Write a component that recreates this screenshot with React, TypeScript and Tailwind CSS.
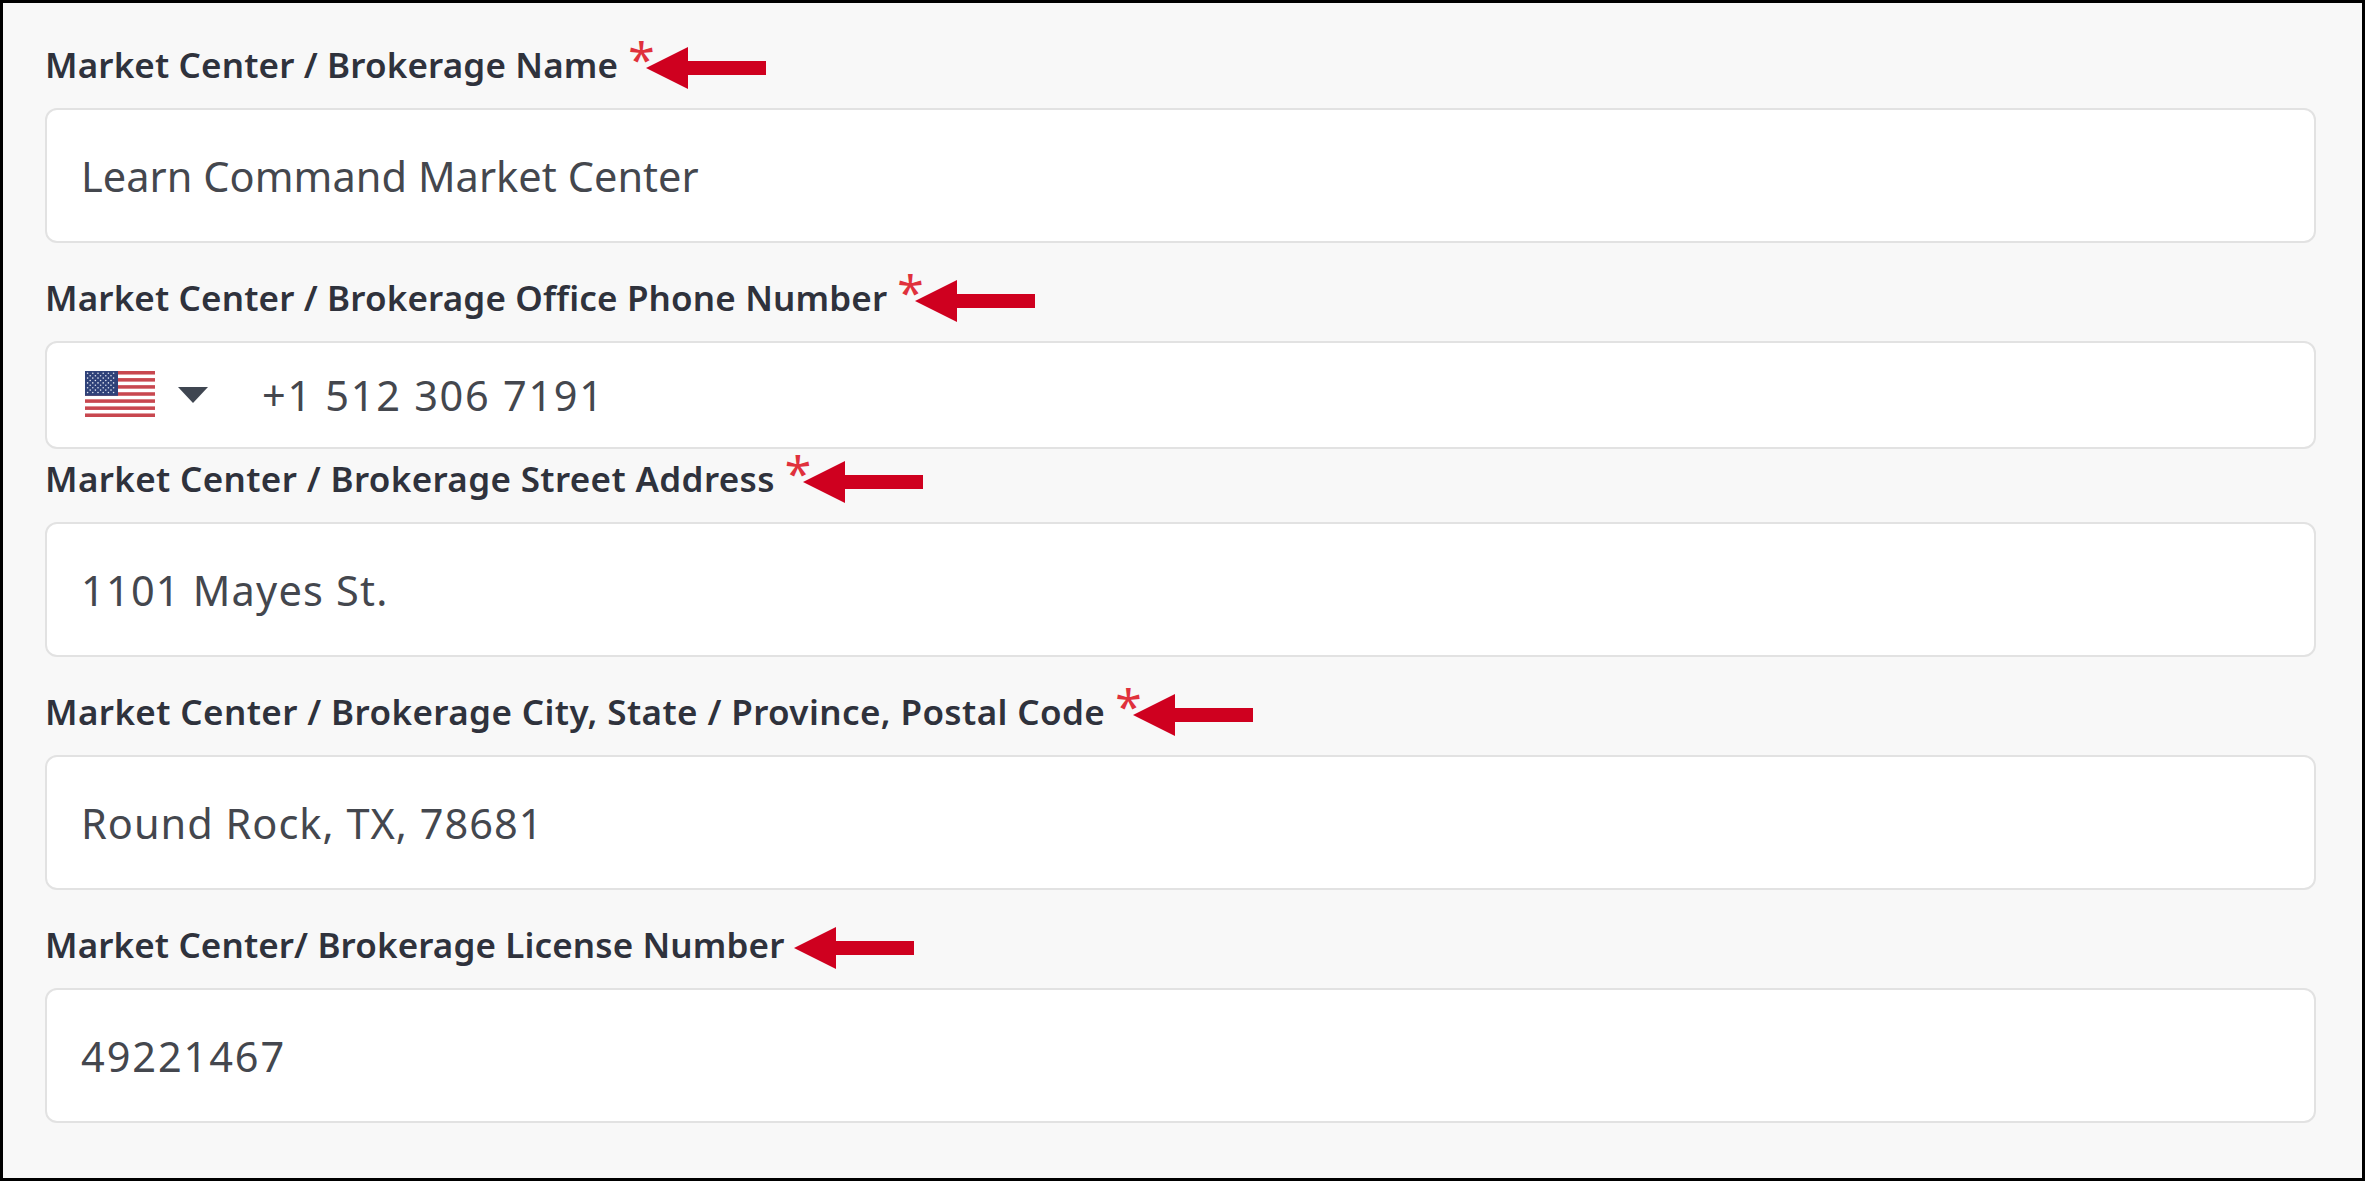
import React from "react";

function Arrow() {
  return (
    <svg width="120" height="42" viewBox="0 0 120 42" className="shrink-0">
      <polygon points="0,21 42,0 42,14 120,14 120,28 42,28 42,42" fill="#cf001f" />
    </svg>
  );
}

function Flag() {
  const stripes = [0, 2, 4, 6, 8, 10, 12];
  const stars: React.ReactElement[] = [];
  for (let r = 0; r < 9; r++) {
    const n = r % 2 === 0 ? 6 : 5;
    for (let c = 0; c < n; c++) {
      stars.push(<circle key={`${r}-${c}`} cx={(r % 2 === 0 ? 2.6 : 5.2) + c * 5.2} cy={2.3 + r * 2.4} r="0.8" fill="#dfe3ee" />);
    }
  }
  return (
    <svg width="70" height="46" viewBox="0 0 70 46" className="mb-[2px] shrink-0">
      <rect width="70" height="46" fill="#fff" />
      {stripes.map((s) => (
        <rect key={s} y={(s * 46) / 13} width="70" height={46 / 13} fill="#c8474f" />
      ))}
      <rect width="33" height="24.8" fill="#2f4279" />
      {stars}
    </svg>
  );
}

function Field({
  label,
  required = true,
  value,
  phone,
  className,
  labelTrack,
  valueTrack,
}: {
  label: string;
  required?: boolean;
  value: string;
  phone?: boolean;
  className: string;
  labelTrack: string;
  valueTrack: string;
}) {
  return (
    <div className={className}>
      <div className="flex h-[40px] items-center">
        <span className={`text-[35px] font-semibold text-[#2f323c] whitespace-nowrap ${labelTrack}`}>{label}</span>
        {required && (
          <span className="ml-[10px] h-[40px] w-[18px] text-[48px] leading-[40px] text-[#e0313c] -translate-y-[6px]">*</span>
        )}
        <span className={required ? "translate-y-[3px]" : "ml-[10px] translate-y-[3px]"}>
          <Arrow />
        </span>
      </div>
      {phone ? (
        <div className="mt-[23px] flex h-[108px] items-center rounded-[12px] border-2 border-[#e2e2e2] bg-white pl-[38px]">
          <Flag />
          <svg width="32" height="18" viewBox="0 0 32 18" className="ml-[22px] shrink-0">
            <polygon points="1,1 31,1 16,17" fill="#3f4651" />
          </svg>
          <span className={`ml-[53px] text-[41.5px] text-[#44474e] ${valueTrack}`}>{value}</span>
        </div>
      ) : (
        <div className="mt-[23px] flex h-[135px] items-center rounded-[12px] border-2 border-[#e2e2e2] bg-white pl-[34px] pt-[2px]">
          <span className={`text-[41.5px] text-[#44474e] ${valueTrack}`}>{value}</span>
        </div>
      )}
    </div>
  );
}

export default function App() {
  return (
    <div className="h-[1181px] w-[2365px] border-[3px] border-black bg-[#f8f8f8] pl-[42px] pr-[46px] pt-[42px] font-['Noto_Sans','Liberation_Sans',sans-serif]">
      <Field className="mb-[35px]" labelTrack="tracking-[0.15px]" valueTrack="tracking-[0.05px]" label="Market Center / Brokerage Name" value="Learn Command Market Center" />
      <Field className="mb-[10px]" labelTrack="tracking-[0.15px]" valueTrack="tracking-[1.7px]" label="Market Center / Brokerage Office Phone Number" value="+1 512 306 7191" phone />
      <Field className="mb-[35px]" labelTrack="tracking-[0.36px]" valueTrack="tracking-[1.2px]" label="Market Center / Brokerage Street Address" value="1101 Mayes St." />
      <Field className="mb-[35px]" labelTrack="tracking-[0.4px]" valueTrack="tracking-[1px]" label="Market Center / Brokerage City, State / Province, Postal Code" value="Round Rock, TX, 78681" />
      <Field className="" labelTrack="tracking-[0.12px]" valueTrack="tracking-[1.9px]" label="Market Center/ Brokerage License Number" required={false} value="49221467" />
    </div>
  );
}
